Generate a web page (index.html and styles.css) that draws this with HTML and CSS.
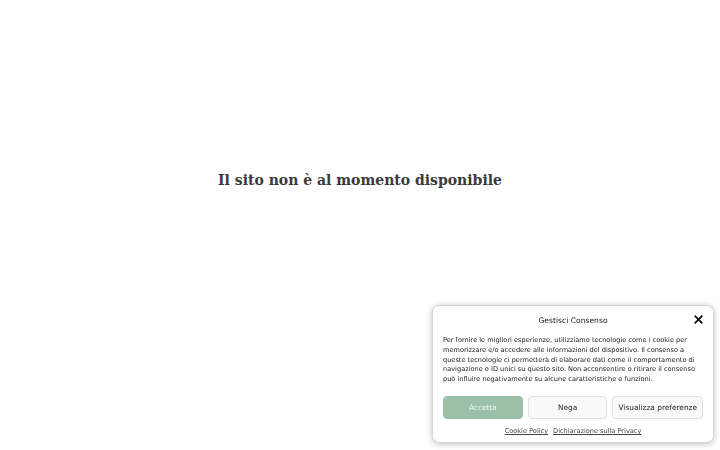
FILE: index.html
```html
<!DOCTYPE html>
<html lang="it">
<head>
  <meta charset="UTF-8" />
  <meta name="viewport" content="width=device-width, initial-scale=1.0"/>
  <title>Il sito non è al momento disponibile</title>
  <link rel="stylesheet" href="styles.css">
</head>
<body>

  <main class="maintenance">
    <h1>Il sito non è al momento disponibile</h1>
  </main>

  <div class="cookiebanner">
    <div class="banner-header">
      <span class="banner-title">Gestisci Consenso</span>
      <button class="banner-close" aria-label="Chiudi">
        <svg viewBox="0 0 10 10" width="9" height="9">
          <path d="M1.5 1.5 L8.5 8.5 M8.5 1.5 L1.5 8.5" stroke="#111" stroke-width="2" stroke-linecap="square"/>
        </svg>
      </button>
    </div>
    <p class="banner-message">
      Per fornire le migliori esperienze, utilizziamo tecnologie come i cookie per memorizzare e/o accedere alle informazioni del dispositivo. Il consenso a queste tecnologie ci permetterà di elaborare dati come il comportamento di navigazione o ID unici su questo sito. Non acconsentire o ritirare il consenso può influire negativamente su alcune caratteristiche e funzioni.
    </p>
    <div class="banner-buttons">
      <button class="btn btn-accept">Accetta</button>
      <button class="btn">Nega</button>
      <button class="btn">Visualizza preferenze</button>
    </div>
    <div class="banner-links">
      <a href="#">Cookie Policy</a>
      <a href="#">Dichiarazione sulla Privacy</a>
    </div>
  </div>

</body>
</html>
```

FILE: styles.css
```css
* {
  box-sizing: border-box;
  margin: 0;
  padding: 0;
}

body {
  font-family: "DejaVu Sans", sans-serif;
  background: #fff;
  color: #222;
  min-height: 100vh;
}

.maintenance {
  height: 360px;
  display: flex;
  justify-content: center;
  align-items: center;
}

.maintenance h1 {
  font-family: "DejaVu Serif", serif;
  font-weight: bold;
  font-size: 14px;
  color: #3a3a3a;
}

/* consent banner, pinned bottom right */
.cookiebanner {
  position: fixed;
  right: 6px;
  bottom: 7px;
  width: 282px;
  background: #fff;
  border: 1px solid #cfd8d2;
  border-radius: 7px;
  box-shadow: 0 1px 6px rgba(0, 0, 0, 0.25);
  padding: 8px 10px 7px;
}

.banner-header {
  display: flex;
  justify-content: center;
  align-items: center;
  position: relative;
  height: 12px;
}

.banner-title {
  font-size: 7.6px;
  color: #222;
}

.banner-close {
  position: absolute;
  right: 0;
  top: 1px;
  background: none;
  border: none;
  display: flex;
  cursor: pointer;
}

.banner-message {
  margin-top: 10px;
  font-size: 6.6px;
  line-height: 9.8px;
  color: #1a1a1a;
}

.banner-buttons {
  display: flex;
  gap: 5px;
  margin-top: 11px;
}

.btn {
  flex: 1 1 0;
  height: 23px;
  padding: 0 5px;
  white-space: nowrap;
  font-family: "DejaVu Sans", sans-serif;
  font-size: 7.4px;
  color: #222;
  background: #f9f9f9;
  border: 1px solid #e0e0e0;
  border-radius: 4px;
  cursor: pointer;
}

.btn-accept {
  background: #9bbfa7;
  border-color: #9bbfa7;
  color: #eef5f0;
}

.banner-links {
  display: flex;
  justify-content: center;
  gap: 5px;
  margin-top: 8px;
}

.banner-links a {
  font-size: 6.6px;
  color: #444;
}
```
